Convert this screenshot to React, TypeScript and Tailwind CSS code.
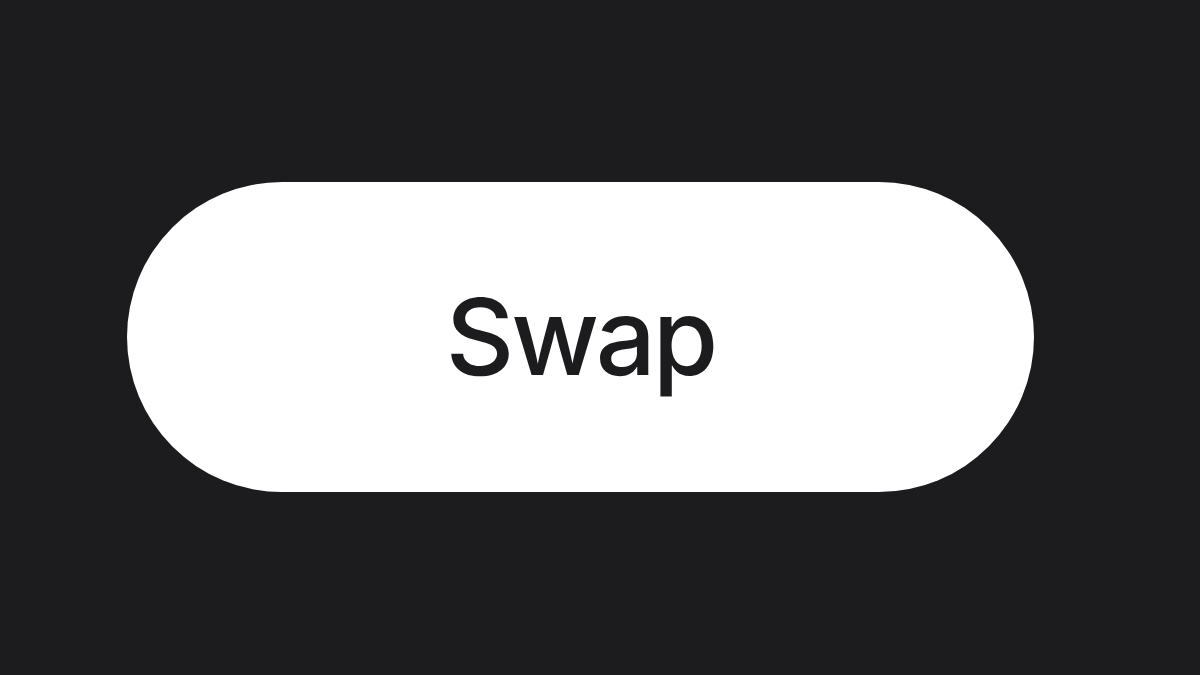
export default function App() {
  return (
    <div className="w-[1200px] h-[675px] bg-[#1c1c1e] pl-[127px] pt-[182px]" style={{ fontFamily: "Inter, 'Noto Sans', sans-serif" }}>
      <button className="w-[907px] h-[310px] rounded-full bg-white flex items-center justify-center text-[#1c1c1e] text-[106px] font-medium leading-none tracking-[-0.03em]">
        Swap
      </button>
    </div>
  );
}
